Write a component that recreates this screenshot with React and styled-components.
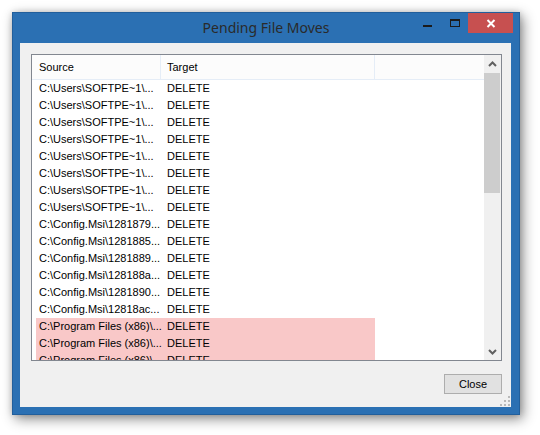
import React from 'react'
import styled, { createGlobalStyle } from 'styled-components'

const GlobalStyle = createGlobalStyle`
  html, body { margin: 0; padding: 0; background: #ffffff; }
  * { box-sizing: border-box; }
`;

const Page = styled.div`
  padding: 12px;
  width: 540px;
  height: 435px;
  background: #ffffff;
`;

const Window = styled.div`
  width: 508px;
  height: 403px;
  background: #2b70b3;
  border: 1px solid #225f9c;
  box-shadow: 3px 4px 12px rgba(0, 0, 0, 0.45), 0 0 6px rgba(0, 0, 0, 0.15);
  display: flex;
  flex-direction: column;
  padding: 0 8px 7px 7px;
`;

const TitleBar = styled.div`
  height: 30px;
  margin: 0 -8px 0 -7px;
  display: grid;
  grid-template-columns: 1fr auto 1fr;
`;

const Title = styled.div`
  grid-column: 2;
  font-family: "Noto Sans", "Open Sans", sans-serif;
  font-size: 14px;
  color: #2a2a2a;
  line-height: 30px;
`;

const Controls = styled.div`
  grid-column: 3;
  justify-self: end;
  display: flex;
  align-items: flex-start;
  margin-right: 6px;
`;

const CaptionButton = styled.div`
  width: ${p => p.$w}px;
  height: 20px;
  display: flex;
  align-items: flex-end;
  justify-content: center;
  padding-bottom: 6px;
  padding-right: ${p => p.$pr || 0}px;
`;

const MinGlyph = styled.div`
  width: 9px;
  height: 2px;
  background: #1b1b1b;
`;

const MaxGlyph = styled.div`
  width: 10px;
  height: 8px;
  border: 1px solid #1b1b1b;
  border-top-width: 2px;
`;

const CloseButton = styled.div`
  width: 45px;
  height: 20px;
  background: #c75050;
  display: flex;
  align-items: center;
  justify-content: center;
`;

const Client = styled.div`
  flex: 1;
  position: relative;
  background: #f0f0f0;
  display: flex;
  flex-direction: column;
  gap: 13px;
  padding: 11px 9px 13px 11px;
  font-family: "Liberation Sans", Arial, sans-serif;
  font-size: 11px;
  color: #000;
`;

const ListView = styled.div`
  height: 307px;
  border: 1px solid #828790;
  background: #ffffff;
  display: flex;
  overflow: hidden;
`;

const ListContent = styled.div`
  flex: 1;
  overflow: hidden;
`;

const Header = styled.div`
  height: 25px;
  display: flex;
  background: #fcfcfc;
  border-bottom: 1px solid #e5edf7;
`;

const HeaderCell = styled.div`
  width: ${p => p.$w}px;
  padding-left: ${p => p.$pl}px;
  border-right: 1px solid #e5edf7;
  line-height: 24px;
  white-space: nowrap;
`;

const HeaderFill = styled.div`
  flex: 1;
`;

const Row = styled.div`
  display: flex;
  width: 339px;
  height: 17px;
  margin-left: 4px;
  line-height: 17px;
  background: ${p => (p.$highlight ? '#f9c8c8' : 'transparent')};
`;

const Cell = styled.div`
  width: ${p => p.$w}px;
  padding-left: 3px;
  white-space: nowrap;
  overflow: hidden;
`;

const ScrollBar = styled.div`
  width: 17px;
  background: #f0f0f0;
  display: flex;
  flex-direction: column;
`;

const ScrollArrow = styled.div`
  height: 17px;
  display: flex;
  align-items: center;
  justify-content: center;
`;

const ScrollThumb = styled.div`
  height: 120px;
  margin: 1px 1px 0 0;
  background: #cdcdcd;
`;

const ScrollTrack = styled.div`
  flex: 1;
`;

const ButtonRow = styled.div`
  display: flex;
  justify-content: flex-end;
`;

const Button = styled.div`
  width: 58px;
  height: 20px;
  border: 1px solid #adadad;
  background: #e1e1e1;
  text-align: center;
  line-height: 18px;
  font-size: 11px;
`;

const Grip = styled.svg`
  position: absolute;
  right: 1px;
  bottom: 1px;
`;

const Chevron = ({ down }) => (
  <svg width="9" height="6" viewBox="0 0 9 6">
    <path
      d={down ? 'M1 1 L4.5 4.5 L8 1' : 'M1 5 L4.5 1.5 L8 5'}
      fill="none"
      stroke="#606060"
      strokeWidth="2"
    />
  </svg>
);

const rows = [
  ['C:\\Users\\SOFTPE~1\\...', 'DELETE'],
  ['C:\\Users\\SOFTPE~1\\...', 'DELETE'],
  ['C:\\Users\\SOFTPE~1\\...', 'DELETE'],
  ['C:\\Users\\SOFTPE~1\\...', 'DELETE'],
  ['C:\\Users\\SOFTPE~1\\...', 'DELETE'],
  ['C:\\Users\\SOFTPE~1\\...', 'DELETE'],
  ['C:\\Users\\SOFTPE~1\\...', 'DELETE'],
  ['C:\\Users\\SOFTPE~1\\...', 'DELETE'],
  ['C:\\Config.Msi\\1281879...', 'DELETE'],
  ['C:\\Config.Msi\\1281885...', 'DELETE'],
  ['C:\\Config.Msi\\1281889...', 'DELETE'],
  ['C:\\Config.Msi\\128188a...', 'DELETE'],
  ['C:\\Config.Msi\\1281890...', 'DELETE'],
  ['C:\\Config.Msi\\12818ac...', 'DELETE'],
  ['C:\\Program Files (x86)\\...', 'DELETE', true],
  ['C:\\Program Files (x86)\\...', 'DELETE', true],
  ['C:\\Program Files (x86)\\...', 'DELETE', true],
];

export default function App() {
  return (
    <>
      <GlobalStyle />
      <Page>
        <Window>
          <TitleBar>
            <Title>Pending File Moves</Title>
            <Controls>
              <CaptionButton $w={26} $pr={3}>
                <MinGlyph />
              </CaptionButton>
              <CaptionButton $w={26}>
                <MaxGlyph />
              </CaptionButton>
              <CloseButton>
                <svg width="10" height="9" viewBox="0 0 10 9">
                  <path d="M1.5 1 L8.5 8 M8.5 1 L1.5 8" stroke="#fff" strokeWidth="2" />
                </svg>
              </CloseButton>
            </Controls>
          </TitleBar>
          <Client>
            <ListView>
              <ListContent>
                <Header>
                  <HeaderCell $w={129} $pl={7}>Source</HeaderCell>
                  <HeaderCell $w={214} $pl={6}>Target</HeaderCell>
                  <HeaderFill />
                </Header>
                {rows.map(([src, dst, hl], i) => (
                  <Row key={i} $highlight={hl}>
                    <Cell $w={128}>{src}</Cell>
                    <Cell $w={211}>{dst}</Cell>
                  </Row>
                ))}
              </ListContent>
              <ScrollBar>
                <ScrollArrow><Chevron /></ScrollArrow>
                <ScrollThumb />
                <ScrollTrack />
                <ScrollArrow><Chevron down /></ScrollArrow>
              </ScrollBar>
            </ListView>
            <ButtonRow>
              <Button>Close</Button>
            </ButtonRow>
            <Grip width="10" height="10" viewBox="0 0 10 10">
              <rect x="8" y="0" width="2" height="2" fill="#b9b9b9" />
              <rect x="4" y="4" width="2" height="2" fill="#b9b9b9" />
              <rect x="8" y="4" width="2" height="2" fill="#b9b9b9" />
              <rect x="0" y="8" width="2" height="2" fill="#b9b9b9" />
              <rect x="4" y="8" width="2" height="2" fill="#b9b9b9" />
              <rect x="8" y="8" width="2" height="2" fill="#b9b9b9" />
            </Grip>
          </Client>
        </Window>
      </Page>
    </>
  )
}
